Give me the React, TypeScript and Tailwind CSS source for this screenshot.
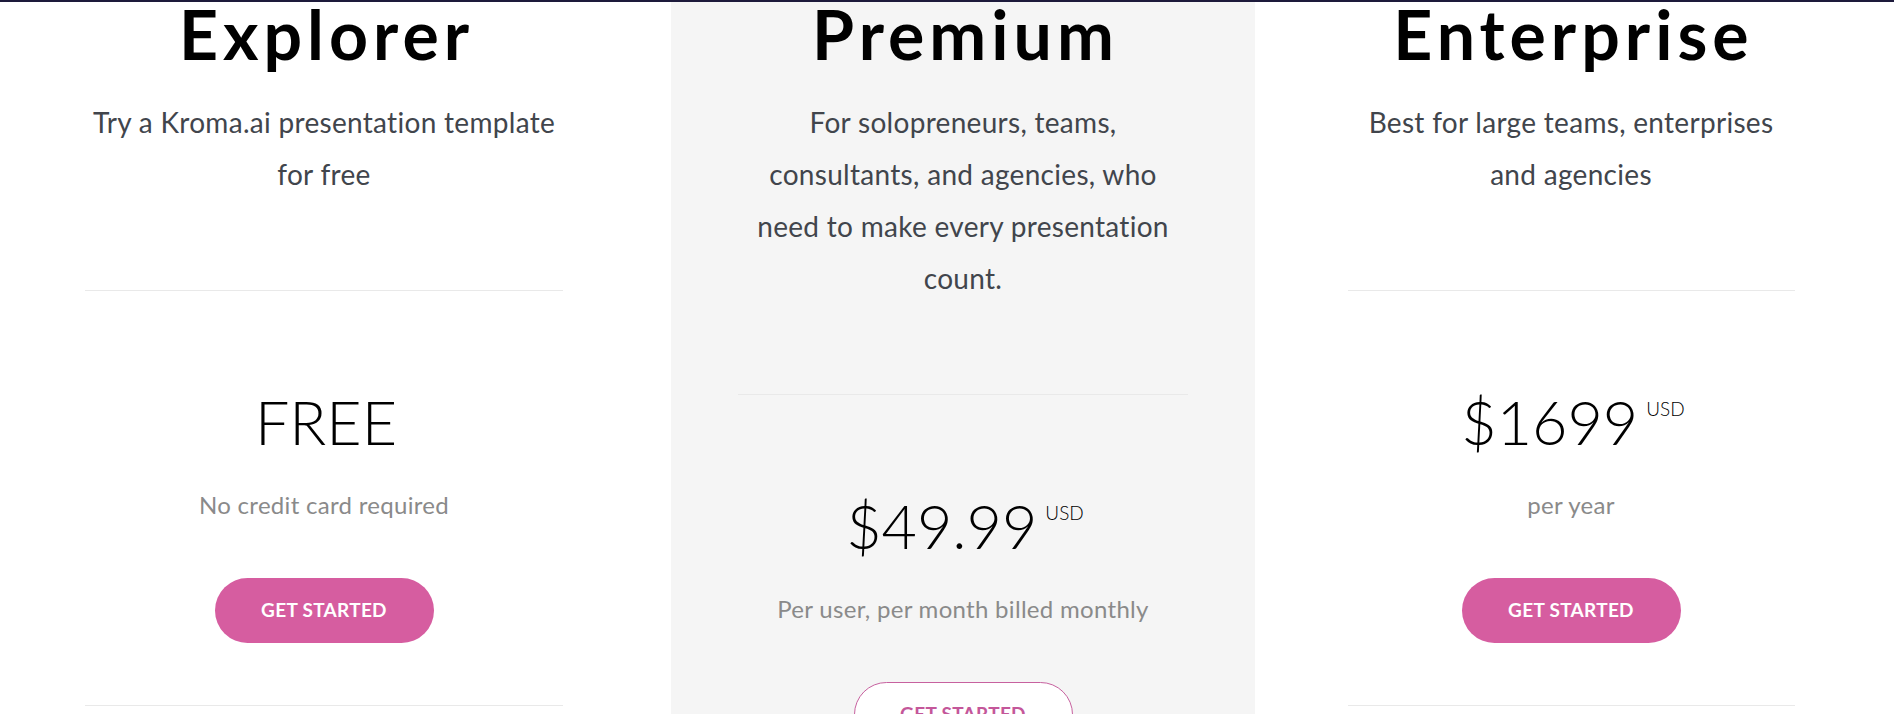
const font = { fontFamily: 'Lato, "Open Sans", sans-serif' };

type Plan = {
  name: string;
  lines: string[];
  price: string;
  currency?: string;
  note: string;
  outline?: boolean;
};

const plans: Plan[] = [
  {
    name: 'Explorer',
    lines: ['Try a Kroma.ai presentation template', 'for free'],
    price: 'FREE',
    note: 'No credit card required',
  },
  {
    name: 'Premium',
    lines: [
      'For solopreneurs, teams,',
      'consultants, and agencies, who',
      'need to make every presentation',
      'count.',
    ],
    price: '$49.99',
    currency: 'USD',
    note: 'Per user, per month billed monthly',
    outline: true,
  },
  {
    name: 'Enterprise',
    lines: ['Best for large teams, enterprises', 'and agencies'],
    price: '$1699',
    currency: 'USD',
    note: 'per year',
  },
];

function PlanColumn({ plan, rule }: { plan: Plan; rule: string }) {
  return (
    <div className="flex flex-col items-center">
      <h2 className="-mt-[2px] pl-[5px] text-[68px] font-bold leading-none tracking-[5px] text-black">
        {plan.name}
      </h2>
      <p className="mt-[28px] text-center text-[28px] leading-[52px] tracking-[0.3px] text-[#41454c]">
        {plan.lines.map((l, i) => (
          <span key={i} className="block">
            {l}
          </span>
        ))}
      </p>
      <div className={`mt-[90px] h-px bg-[#e9e9e9] ${rule}`} />
      <div className="mt-[100px] flex items-start pl-[4px]">
        <span className="text-[61px] font-light leading-none text-black">{plan.price}</span>
        {plan.currency && (
          <span className="ml-[8px] mt-[8px] text-[19px] font-light leading-none text-black">
            {plan.currency}
          </span>
        )}
      </div>
      <p className="mt-[38px] text-[24px] leading-[30px] tracking-[0.3px] text-[#8a8a8a]">
        {plan.note}
      </p>
      {plan.outline ? (
        <button className="mt-[58px] flex h-[65px] w-[219px] shrink-0 items-center justify-center rounded-full border border-[#c7619f] bg-white text-[19px] font-bold tracking-[0.3px] text-[#c4579a]">
          GET STARTED
        </button>
      ) : (
        <button className="mt-[58px] flex h-[65px] w-[219px] shrink-0 items-center justify-center rounded-full bg-[#d65da0] text-[19px] font-bold tracking-[0.3px] text-white">
          GET STARTED
        </button>
      )}
      <div className={`mt-[62px] h-px shrink-0 bg-[#e9e9e9] ${rule}`} />
    </div>
  );
}

export default function App() {
  return (
    <div className="h-[714px] w-[1894px] overflow-hidden bg-white" style={font}>
      <div className="h-[2px] bg-[#1d1a3b]" />
      <div className="flex">
        <div className="w-[648px]">
          <PlanColumn plan={plans[0]} rule="w-[478px]" />
        </div>
        <div className="ml-[23px] h-[712px] w-[584px] bg-[#f5f5f5]">
          <PlanColumn plan={plans[1]} rule="w-[450px]" />
        </div>
        <div className="w-[632px]">
          <PlanColumn plan={plans[2]} rule="w-[447px]" />
        </div>
      </div>
    </div>
  );
}
